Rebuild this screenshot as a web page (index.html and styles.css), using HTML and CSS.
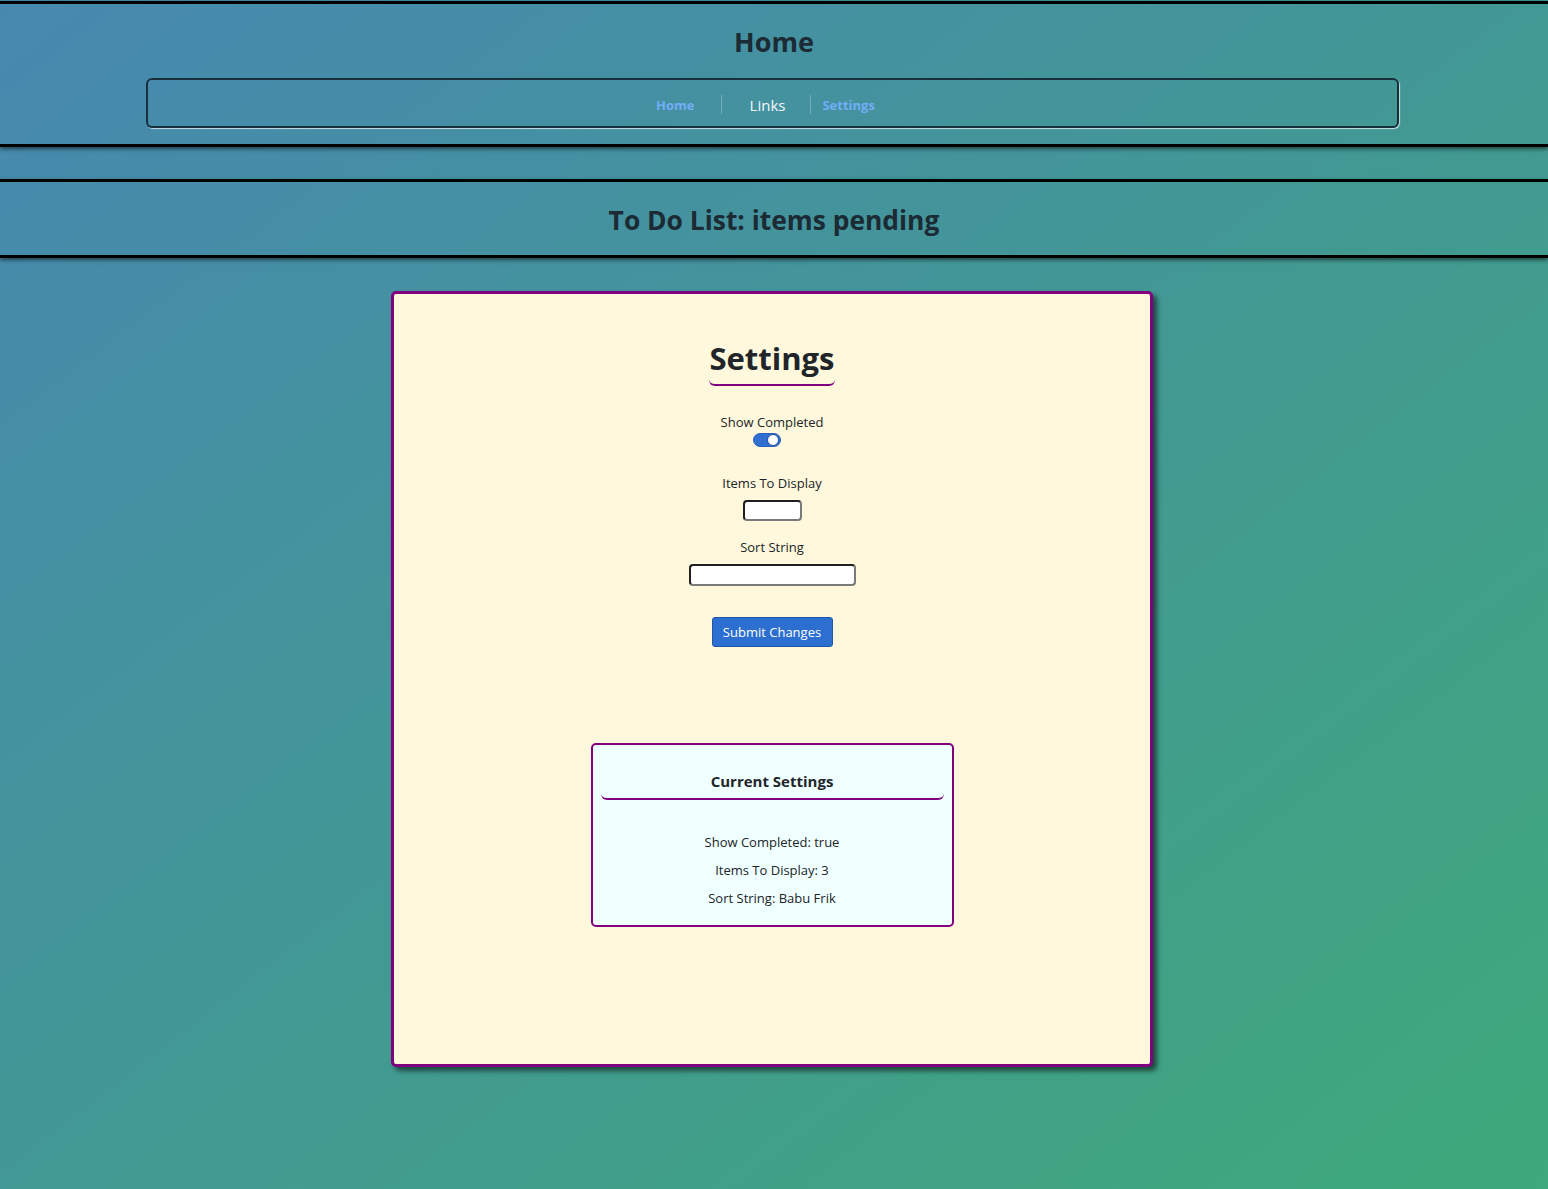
FILE: index.html
```html
<!DOCTYPE html>
<html lang="en">
<head>
<meta charset="utf-8">
<title>Settings</title>
<link rel="stylesheet" href="styles.css">
</head>
<body>
<header class="site-header">
  <h1 class="site-title">Home</h1>
  <nav class="site-nav">
    <a class="nav-item nav-bold nav-home" href="#">Home</a>
    <span class="nav-sep"></span>
    <a class="nav-item nav-plain" href="#">Links</a>
    <span class="nav-sep"></span>
    <a class="nav-item nav-bold nav-settings" href="#">Settings</a>
  </nav>
</header>

<section class="page-banner">
  <h2 class="banner-title">To Do List: items pending</h2>
</section>

<main class="card">
  <h2 class="card-title">Settings</h2>
  <form class="settings-form">
    <label class="field-label">Show Completed</label>
    <div class="switch-row"><span class="switch"><span class="knob"></span></span></div>

    <label class="field-label label-items">Items To Display</label>
    <input class="field-input input-small" type="text">

    <label class="field-label label-sort">Sort String</label>
    <input class="field-input input-wide" type="text">

    <button class="submit-btn" type="button">Submit Changes</button>
  </form>

  <section class="current">
    <h3 class="current-title">Current Settings</h3>
    <p class="current-line first">Show Completed: true</p>
    <p class="current-line">Items To Display: 3</p>
    <p class="current-line">Sort String: Babu Frik</p>
  </section>
</main>
</body>
</html>
```

FILE: styles.css
```css
html, body {
  margin: 0;
  padding: 0;
}

body {
  min-height: 1189px;
  background: linear-gradient(to bottom right, #4788b0 0%, #429894 50%, #3ea97a 100%);
  font-family: "Open Sans", "Noto Sans", sans-serif;
  color: #212529;
  padding-top: 1px;
  overflow: hidden;
}

.site-header {
  border-top: 3px solid #000;
  border-bottom: 3px solid #000;
  box-shadow: 0 2px 4px rgba(0, 0, 0, 0.55);
  padding: 20px 0 16px;
}

.site-title {
  margin: 0;
  text-align: center;
  font-size: 27px;
  line-height: 36px;
  font-weight: 700;
  color: #1b2a33;
}

.site-nav {
  width: 1253px;
  box-sizing: border-box;
  height: 50px;
  margin: 18px 0 0 146px;
  border: 2px solid #17303b;
  border-radius: 6px;
  box-shadow: 1px 1px 1px rgba(255, 255, 255, 0.7);
  display: flex;
  justify-content: center;
  align-items: center;
  padding: 3px 14px 0 0;
}

.nav-item {
  text-decoration: none;
}

.nav-bold {
  color: #72adf8;
  font-weight: 700;
  font-size: 13px;
}

.nav-plain {
  color: #f4f8fa;
  font-size: 15px;
  margin: 0 25px 0 28px;
}

.nav-home {
  margin-right: 26px;
}

.nav-settings {
  margin-left: 11px;
}

.nav-sep {
  width: 1px;
  height: 19px;
  background: rgba(255, 255, 255, 0.25);
}

.page-banner {
  margin-top: 32px;
  border-top: 3px solid #000;
  border-bottom: 3px solid #000;
  box-shadow: 0 2px 4px rgba(0, 0, 0, 0.55);
  height: 73px;
  display: flex;
  align-items: center;
  justify-content: center;
}

.banner-title {
  margin: 2px 0 0;
  font-size: 26.4px;
  font-weight: 700;
  line-height: 36px;
  color: #1b2a33;
}

.card {
  display: flex;
  flex-direction: column;
  align-items: center;
  box-sizing: border-box;
  width: 762px;
  height: 776px;
  margin: 33px 0 0 391px;
  border: 3px solid #800080;
  border-radius: 5px;
  background: #fff8dc;
  box-shadow: 4px 4px 5px rgba(0, 0, 0, 0.55);
}

.card-title {
  margin: 44px 0 0;
  font-size: 31px;
  line-height: 40px;
  font-weight: 700;
  padding-bottom: 6px;
  border-bottom: 2px solid #800080;
  border-radius: 6px;
}

.settings-form {
  display: flex;
  flex-direction: column;
  align-items: center;
}

.field-label {
  font-size: 13px;
  line-height: 20px;
  margin-top: 26px;
}

.label-sort {
  margin-top: 16px;
}

.switch-row {
  width: 28px;
  margin: 1px 11px 0 0;
  height: 14px;
}

.switch {
  display: flex;
  justify-content: flex-end;
  align-items: center;
  box-sizing: border-box;
  width: 28px;
  height: 14px;
  border-radius: 7px;
  background: #2f6fd2;
  border: 1px solid #2a62bd;
  padding-right: 1px;
}

.knob {
  box-sizing: border-box;
  width: 12px;
  height: 12px;
  border-radius: 50%;
  background: #fff;
  border: 1px solid #1f4f9e;
}

.field-input {
  box-sizing: border-box;
  margin-top: 7px;
  background: #fff;
  border: 2px solid;
  border-color: #1f1f1f #7a7a7a #7a7a7a #1f1f1f;
  border-radius: 4px;
  padding: 0 4px;
  font: inherit;
}

.input-small {
  width: 59px;
  height: 21px;
}

.input-wide {
  width: 167px;
  height: 22px;
}

.submit-btn {
  margin-top: 31px;
  box-sizing: border-box;
  width: 121px;
  height: 30px;
  background: #2c6fd1;
  color: #fff;
  border: 1px solid #1f56a8;
  border-radius: 3px;
  font-family: inherit;
  font-size: 13px;
  padding: 0;
}

.current {
  box-sizing: border-box;
  width: 363px;
  height: 184px;
  margin-top: 96px;
  border: 2px solid #800080;
  border-radius: 5px;
  background: #f0ffff;
  padding: 26px 8px 0;
  text-align: center;
}

.current-title {
  margin: 0;
  font-size: 15px;
  line-height: 20px;
  font-weight: 700;
  padding-bottom: 7px;
  border-bottom: 2px solid #800080;
  border-radius: 6px;
}

.current-line {
  margin: 8px 0 0;
  font-size: 13px;
  line-height: 20px;
}

.current-line.first {
  margin-top: 32px;
}
```
